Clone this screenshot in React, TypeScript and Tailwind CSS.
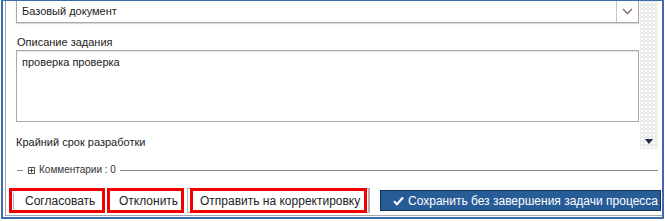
import React from "react";

function Chevron() {
  return (
    <svg width="11" height="7" viewBox="0 0 11 7">
      <path d="M1 1 L5.5 5.5 L10 1" fill="none" stroke="#8a7a70" strokeWidth="1.6" />
    </svg>
  );
}

function Check() {
  return (
    <svg width="11" height="10" viewBox="0 0 11 10">
      <path d="M1 5.2 L4 8.2 L10 1.5" fill="none" stroke="#ffffff" strokeWidth="2.2" />
    </svg>
  );
}

export default function App() {
  return (
    <div className="w-[665px] h-[221px] bg-white overflow-hidden font-['Liberation_Sans',Arial,sans-serif] text-[#222222]">
      <div className="ml-[1px] w-[663px] h-[219px] border-t border-l-2 border-r-2 border-b-2 border-[#3b6cae] pl-[2px]">
        <div className="w-[657px] h-[215px] border-l border-b border-[#a8a8a8] flex flex-col">
          {/* scroll region */}
          <div className="h-[148px] flex overflow-hidden">
            <div className="w-[633px] pl-[10px] flex flex-col">
              <div className="h-[22px] border-x border-b border-[#a9a9a9] flex items-center shadow-[0_1px_1px_rgba(0,0,0,0.15)]">
                <div className="flex-1 pl-[5px] text-[11px] leading-[14px]">Базовый документ</div>
                <div className="w-[22px] h-full border-l border-[#c8c8c8] flex items-center justify-center">
                  <Chevron />
                </div>
              </div>
              <div className="mt-[12px] text-[11px] leading-[14px] pl-[1px]">Описание задания</div>
              <div className="mt-[1px] h-[73px] border border-[#a9a9a9] shadow-[inset_0_1px_1px_rgba(0,0,0,0.1)] pl-[5px] pt-[4px] text-[11px] leading-[14px]">
                проверка проверка
              </div>
              <div className="mt-[13px] text-[11px] leading-[14px]">Крайний срок разработки</div>
            </div>
            <div className="ml-[1px] w-[18px] h-full bg-[#ebebeb] bg-[radial-gradient(circle,#ffffff_0.7px,transparent_1px)] bg-[length:4px_4px] flex flex-col justify-end items-center pb-[5px]">
              <svg width="8" height="5" viewBox="0 0 8 5">
                <path d="M0 0 L8 0 L4 5 Z" fill="#1c2a44" />
              </svg>
            </div>
          </div>

          {/* comments */}
          <div className="mt-[15px] h-[12px] flex items-center pl-[11px] pr-[4px]">
            <div className="w-[6px] h-px bg-[#8a8a8a]" />
            <div className="ml-[5px] w-[7px] h-[7px] border border-[#555] flex items-center justify-center">
              <svg width="5" height="5" viewBox="0 0 5 5">
                <path d="M2.5 0.5 V4.5 M0.5 2.5 H4.5" stroke="#444" strokeWidth="1" />
              </svg>
            </div>
            <div className="ml-[4px] text-[10px] leading-[12px] text-[#333]">Комментарии : 0</div>
            <div className="ml-[4px] flex-1 h-px bg-[#8a8a8a]" />
          </div>

          {/* buttons */}
          <div className="mt-[12px] h-[25px] flex items-center pl-[3px]">
            <div className="w-[96px] h-[25px] border-[3px] border-[#f00000] flex items-center">
              <div className="ml-[1px] w-px h-[16px] bg-[#b0b0b0]" />
              <span className="ml-[11px] text-[12px] leading-[14px]">Согласовать</span>
            </div>
            <div className="ml-[2px] w-[77px] h-[25px] border-[3px] border-[#f00000] flex items-center">
              <span className="ml-[9px] text-[12px] leading-[14px]">Отклонить</span>
            </div>
            <div className="ml-[3px] w-[183px] h-[25px] border border-[#b4b4b4] border-r-2 flex items-center pl-[2px]">
              <div className="w-[177px] h-[25px] -my-px border-[3px] border-[#f00000] flex items-center">
                <span className="ml-[7px] text-[12px] leading-[14px]">Отправить на корректировку</span>
              </div>
            </div>
            <div className="ml-[10px] w-[281px] h-[21px] bg-[#275c97] border border-[#14325a] flex items-center pl-[12px] text-white">
              <Check />
              <span className="ml-[4px] text-[12px] leading-[14px]">Сохранить без завершения задачи процесса</span>
            </div>
          </div>
        </div>
      </div>
    </div>
  );
}
